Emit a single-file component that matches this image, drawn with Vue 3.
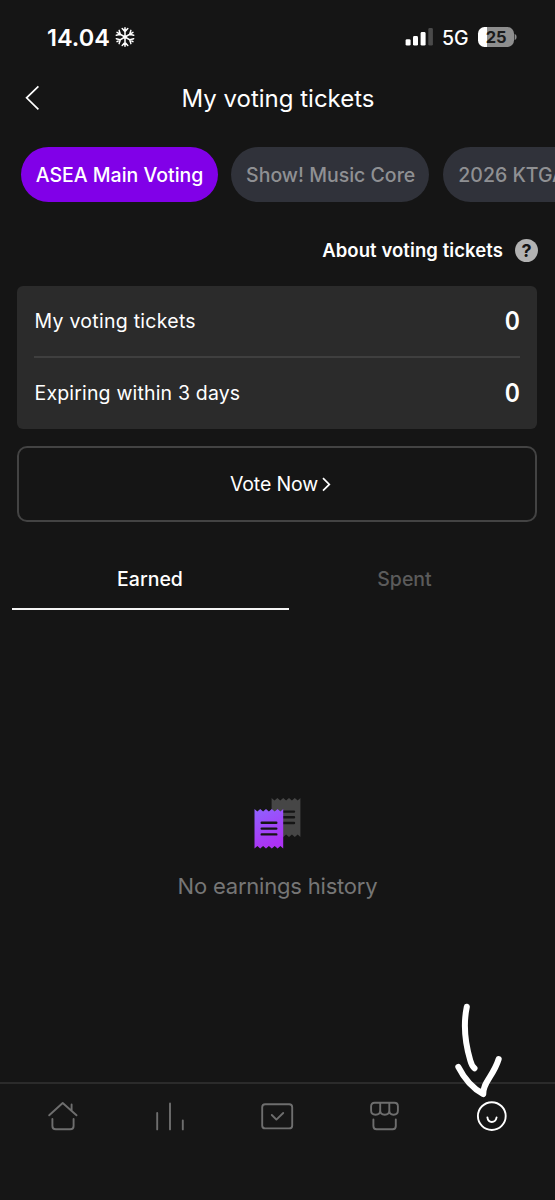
<script setup>
const chips = [
  { label: 'ASEA Main Voting', active: true, cls: 'chip-a' },
  { label: 'Show! Music Core', active: false, cls: 'chip-b' },
  { label: '2026 KTGA', active: false, cls: 'chip-c' },
]
const rows = [
  { label: 'My voting tickets', value: 0, cls: 'first' },
  { label: 'Expiring within 3 days', value: 0, cls: 'second' },
]
</script>

<template>
  <div class="screen">
    <header class="status">
      <div class="clock">
        <span class="time">14.04</span>
        <svg class="flake" width="20" height="20" viewBox="-10 -10 20 20">
          <g v-for="n in 6" :key="n" :transform="`rotate(${n * 60})`">
            <path d="M0 0V-9.2M-2.8 -8.4L0 -5.4L2.8 -8.4" />
          </g>
          <circle r="1.7" />
        </svg>
      </div>
      <div class="signals">
        <svg class="bars" width="28" height="18" viewBox="0 0 28 18">
          <rect x="0.6" y="11.2" width="5" height="6.4" rx="1.4" />
          <rect x="8" y="8" width="5" height="9.6" rx="1.4" />
          <rect x="15.6" y="4" width="5" height="13.6" rx="1.4" />
          <rect class="dim" x="23.3" y="0" width="4.6" height="17.6" rx="1.4" />
        </svg>
        <span class="net">5G</span>
        <div class="battery"><span class="pct">25</span></div>
        <svg class="nub" width="3" height="8" viewBox="0 0 3 8"><path d="M0.6 0.8Q2.6 1.8 2.6 4T0.6 7.2Z" /></svg>
      </div>
    </header>

    <div class="titlebar">
      <svg class="back" width="16" height="26" viewBox="0 0 16 26"><path d="M14.4 1.3L2.6 12.8L14.4 24.3" /></svg>
      <h1>My voting tickets</h1>
    </div>

    <nav class="chips">
      <div v-for="c in chips" :key="c.label" class="chip" :class="[c.cls, { active: c.active }]">
        <span>{{ c.label }}</span>
      </div>
    </nav>

    <div class="about">
      <span class="about-text">About voting tickets</span>
      <span class="help">?</span>
    </div>

    <section class="card">
      <div v-for="r in rows" :key="r.label" class="row" :class="r.cls">
        <span class="label">{{ r.label }}</span>
        <span class="value">{{ r.value }}</span>
      </div>
    </section>

    <button class="vote">
      <span>Vote Now</span>
      <svg width="9" height="15" viewBox="0 0 9 15"><path d="M1 1.2L7.3 7.4L1 13.6" /></svg>
    </button>

    <div class="tabs">
      <div class="tab on"><span class="earned">Earned</span></div>
      <div class="tab"><span class="spent">Spent</span></div>
    </div>

    <main class="empty">
      <svg width="48" height="54" viewBox="0 0 48 54">
        <defs>
          <linearGradient id="ticket" x1="0" y1="0" x2="0.35" y2="1">
            <stop offset="0" stop-color="#8f62ff" />
            <stop offset="1" stop-color="#ad32f4" />
          </linearGradient>
        </defs>
        <path fill="#464646" d="M17.6 0L20.5 2.6L23.4 0L26.3 2.6L29.2 0L32.1 2.6L35 0L37.9 2.6L40.8 0L43.7 2.6L46.4 0V39L43.7 36.4L40.8 39L37.9 36.4L35 39L32.1 36.4L29.2 39H17.6Z" />
        <path stroke="#151515" stroke-width="2.4" stroke-linecap="round" d="M29 13.6H40M29 19.3H40M29 25H40" />
        <path fill="url(#ticket)" d="M0.5 11L3.4 13.6L6.2 11L9.1 13.6L12 11L14.9 13.6L17.8 11L20.7 13.6L23.6 11L26.4 13.6L29.2 11V50.6L26.4 48L23.6 50.6L20.7 48L17.8 50.6L14.9 48L12 50.6L9.1 48L6.2 50.6L3.4 48L0.5 50.6Z" />
        <path stroke="#151515" stroke-width="2.4" stroke-linecap="round" d="M7.7 24.8H22.3M7.7 30.6H22.3M7.7 36.4H22.3" />
      </svg>
      <p>No earnings history</p>
    </main>

    <footer class="tabbar">
      <svg viewBox="0 0 40 40"><path d="M7.2 19.3L20.7 7L34.5 19.3M29.6 14.6V8.5M10.4 23V29.9Q10.4 33.3 13.8 33.3H28.2Q31.6 33.3 31.6 29.9V23" /></svg>
      <svg viewBox="0 0 40 40"><path d="M7.2 17V33.4M20 7.4V33.4M32.8 24.4V33.4" /></svg>
      <svg viewBox="0 0 40 40"><rect x="5.2" y="8.2" width="30" height="24.2" rx="3" /><path d="M14.8 19L19.4 23.6L26.2 17" /></svg>
      <svg viewBox="0 0 40 40"><path d="M9.6 6.8H29.4Q32.9 6.8 32.9 10.3V14.6Q32.9 18.8 28.6 18.8Q24.3 18.8 24.3 14.6V6.8M24.3 14.6Q24.3 18.8 19.8 18.8Q15.2 18.8 15.2 14.6V6.8M15.2 14.6Q15.2 18.8 10.6 18.8Q6.1 18.8 6.1 14.6V10.3Q6.1 6.8 9.6 6.8M8.4 23.4V30Q8.4 33.3 11.6 33.3H27.6Q30.8 33.3 30.8 30V23.4" /></svg>
      <svg class="me" viewBox="0 0 40 40"><circle cx="19.8" cy="20.1" r="13.9" /><path d="M15.4 21.4Q16 26 19.8 26T24.6 21.4" /></svg>
    </footer>

    <svg class="arrow" width="60" height="104" viewBox="0 0 60 104">
      <path d="M17.8 6.8C14 25 17 46 21.3 60.5Q22.8 66 25.5 68.3" />
      <path d="M9.3 66.8C15.5 79 24 88.5 34.3 94C33.5 83 44.5 76 49.7 59" />
    </svg>
  </div>
</template>

<style>
body { margin: 0; background: #151515; }
</style>

<style scoped>
.screen {
  position: relative;
  box-sizing: border-box;
  width: 555px;
  height: 1200px;
  overflow: hidden;
  display: flex;
  flex-direction: column;
  background: #151515;
  color: #fff;
  font-family: Inter, "Liberation Sans", sans-serif;
  font-size: 19.5px;
}
svg { display: block; flex: none; fill: none; }
span { white-space: nowrap; }
.status {
  height: 74px;
  padding: 0 38px 0 47px;
  display: flex;
  align-items: center;
  justify-content: space-between;
}
.clock { display: flex; align-items: center; gap: 6px; }
.time { font-size: 23.5px; font-weight: 600; width: 62px; padding-top: 1px; }
.flake path { stroke: #fff; stroke-width: 1.5; stroke-linecap: round; }
.flake circle { fill: #fff; }
.signals { display: flex; align-items: center; }
.bars rect { fill: #fff; }
.bars .dim { fill: #4a4a4a; }
.net { margin-left: 9px; padding-top: 1px; width: 27px; font-size: 19.5px; font-weight: 500; }
.battery {
  margin-left: 9px;
  width: 36px;
  height: 20px;
  border-radius: 6.5px;
  background: linear-gradient(90deg, #fff 9px, #8e8e8e 9px);
  display: flex;
  align-items: center;
  justify-content: center;
}
.pct { color: #1b1b1b; font-size: 16.5px; font-weight: 700; line-height: 20px; letter-spacing: -0.3px; }
.nub path { fill: #8e8e8e; }
.titlebar {
  height: 48px;
  padding-left: 24px;
  display: grid;
  grid-template-columns: 16px 1fr 39px;
  grid-template-rows: 48px;
  align-items: center;
}
.back path { stroke: #fff; stroke-width: 1.7; }
h1 { margin: 0; padding-top: 1px; font-size: 24px; font-weight: 400; text-align: center; line-height: 48px; }
.chips {
  margin-top: 25px;
  height: 55px;
  padding-left: 21px;
  display: flex;
  gap: 13.4px;
}
.chip {
  flex: none;
  box-sizing: border-box;
  height: 55px;
  padding-left: 14.7px;
  border-radius: 28px;
  display: flex;
  align-items: center;
  background: #30323a;
  color: #8f9093;
  font-weight: 500;
}
.chip.active { background: #8100e8; color: #fff; }
.chip-a { width: 197px; }
.chip-b { width: 198px; }
.chip-c { width: 212px; padding-left: 15.5px; }
.about {
  height: 24px;
  margin-top: 36px;
  padding-right: 17px;
  display: flex;
  align-items: center;
  justify-content: flex-end;
  gap: 12px;
}
.about-text { font-size: 18.5px; font-weight: 600; letter-spacing: 0.08px; }
.help {
  width: 23px;
  height: 23px;
  border-radius: 50%;
  background: #b2b2b2;
  color: #151515;
  font-size: 18px;
  font-weight: 700;
  line-height: 23px;
  text-align: center;
}
.card {
  box-sizing: border-box;
  margin: 24px 18px 0 17px;
  padding: 0 17px;
  height: 143px;
  border-radius: 6px;
  background: #2b2b2b;
}
.row {
  box-sizing: border-box;
  height: 70px;
  display: flex;
  align-items: center;
  justify-content: space-between;
}
.second { height: 72px; border-top: 2px solid #3f3f3f; }
.label { padding-left: 0.5px; }
.first .label { letter-spacing: 0.27px; }
.second .label { letter-spacing: 0.17px; }
.value { font-size: 25px; font-weight: 600; transform: scaleX(0.92); }
.vote {
  box-sizing: border-box;
  margin: 17px 18px 0 17px;
  padding: 0 0 0 7px;
  height: 76px;
  border: 2px solid #434343;
  border-radius: 10px;
  background: none;
  color: #fff;
  font: inherit;
  letter-spacing: -0.15px;
  display: flex;
  align-items: center;
  justify-content: center;
  gap: 4px;
}
.vote path { stroke: #fff; stroke-width: 1.7; }
.tabs { margin: 27px 12px 0 11.5px; height: 61px; display: flex; }
.tab {
  box-sizing: border-box;
  width: 277px;
  height: 61px;
  padding-bottom: 2px;
  display: flex;
  align-items: center;
  justify-content: center;
  color: #5b5b5b;
  font-weight: 500;
}
.tab.on { color: #fff; border-bottom: 2px solid #f4f4f4; padding-bottom: 0; }
.tab:last-child { width: 232px; }
.empty {
  height: 472px;
  box-sizing: border-box;
  padding-top: 188px;
  display: flex;
  flex-direction: column;
  align-items: center;
}
.empty p { margin: 19px 0 0; font-size: 22px; line-height: 30px; letter-spacing: -0.2px; color: #767676; }
.tabbar {
  box-sizing: border-box;
  height: 118px;
  border-top: 2px solid #2b2b2b;
  padding: 12px 43px 0 42px;
  display: flex;
  justify-content: space-between;
  background: #161616;
}
.tabbar svg { width: 40px; height: 40px; stroke: #6e6e6e; stroke-width: 1.9; stroke-linecap: round; stroke-linejoin: round; }
.tabbar svg.me { stroke: #fff; }
.arrow {
  position: absolute;
  left: 449px;
  top: 1000px;
  stroke: #fff;
  stroke-width: 6;
  stroke-linecap: round;
  stroke-linejoin: round;
}
</style>
